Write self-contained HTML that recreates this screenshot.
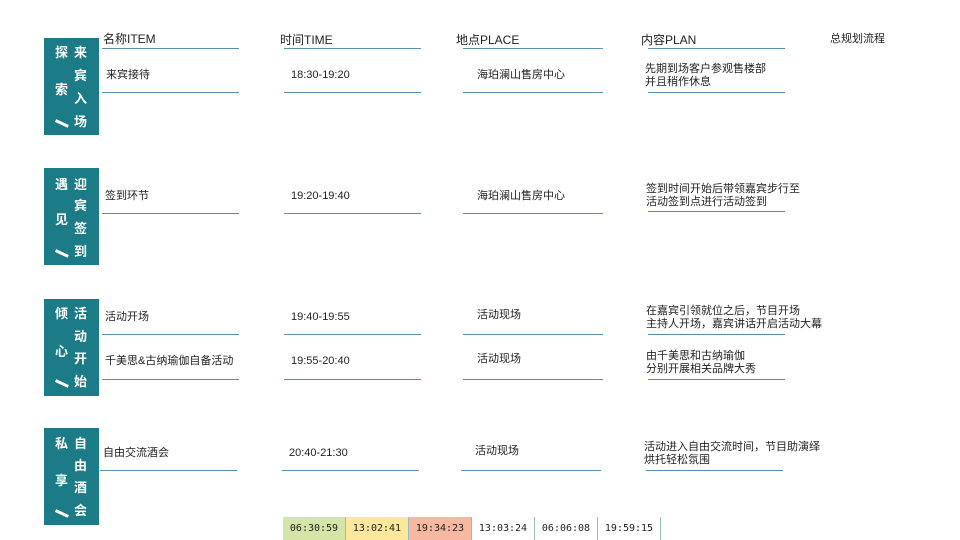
<!DOCTYPE html>
<html><head><meta charset="utf-8"><style>
*{margin:0;padding:0;box-sizing:border-box}
body{width:960px;height:540px;background:#fff;position:relative;overflow:hidden;font-family:"Liberation Sans","Noto Sans CJK SC",sans-serif;color:#222}
.t{position:absolute;font-size:11px;white-space:nowrap;line-height:13px;margin-top:1px}
.h{position:absolute;font-size:12px;white-space:nowrap;line-height:14px}
.l{position:absolute;height:1px;background:#5a8fab}
.box{position:absolute;left:44px;width:55px;height:97px;background:#1b7b86}
.c{position:absolute;color:#fff;font-weight:bold;font-size:13px;line-height:14px}
.s{position:absolute;width:14px;height:2.5px;background:#fff;transform:rotate(25deg)}
.cell{position:absolute;top:517px;height:23px;width:63px;font-family:"DejaVu Sans Mono","Liberation Mono",monospace;font-size:10px;text-align:center;line-height:23px;border-right:1px solid #9bb}
</style></head><body>
<div class="h" style="left:103px;top:32px">名称ITEM</div>
<div class="h" style="left:280px;top:33px">时间TIME</div>
<div class="h" style="left:456px;top:33px">地点PLACE</div>
<div class="h" style="left:641px;top:33px">内容PLAN</div>
<div class="t" style="left:830px;top:32px">总规划流程</div>
<div class="l" style="left:102px;top:48px;width:137px"></div>
<div class="l" style="left:284px;top:48px;width:137px"></div>
<div class="l" style="left:463px;top:48px;width:140px"></div>
<div class="l" style="left:648px;top:48px;width:137px"></div>

<div class="t" style="left:106px;top:68px">来宾接待</div>
<div class="t" style="left:291px;top:68px">18:30-19:20</div>
<div class="t" style="left:477px;top:68px">海珀澜山售房中心</div>
<div class="t" style="left:645px;top:62px">先期到场客户参观售楼部<br>并且稍作休息</div>
<div class="l" style="left:102px;top:92px;width:137px"></div>
<div class="l" style="left:284px;top:92px;width:137px"></div>
<div class="l" style="left:463px;top:92px;width:140px"></div>
<div class="l" style="left:648px;top:92px;width:137px"></div>

<div class="t" style="left:105px;top:189px">签到环节</div>
<div class="t" style="left:291px;top:189px">19:20-19:40</div>
<div class="t" style="left:477px;top:189px">海珀澜山售房中心</div>
<div class="t" style="left:646px;top:182px">签到时间开始后带领嘉宾步行至<br>活动签到点进行活动签到</div>
<div class="l" style="left:102px;top:213px;width:137px"></div>
<div class="l" style="left:284px;top:213px;width:137px"></div>
<div class="l" style="left:463px;top:213px;width:140px"></div>
<div class="l" style="left:648px;top:211px;width:137px"></div>

<div class="t" style="left:105px;top:310px">活动开场</div>
<div class="t" style="left:291px;top:310px">19:40-19:55</div>
<div class="t" style="left:477px;top:308px">活动现场</div>
<div class="t" style="left:646px;top:304px">在嘉宾引领就位之后，节目开场<br>主持人开场，嘉宾讲话开启活动大幕</div>
<div class="l" style="left:102px;top:334px;width:137px"></div>
<div class="l" style="left:284px;top:334px;width:137px"></div>
<div class="l" style="left:463px;top:334px;width:140px"></div>
<div class="l" style="left:648px;top:334px;width:137px"></div>
<div class="t" style="left:105px;top:354px">千美思&amp;古纳瑜伽自备活动</div>
<div class="t" style="left:291px;top:354px">19:55-20:40</div>
<div class="t" style="left:477px;top:352px">活动现场</div>
<div class="t" style="left:646px;top:349px">由千美思和古纳瑜伽<br>分别开展相关品牌大秀</div>
<div class="l" style="left:102px;top:379px;width:137px"></div>
<div class="l" style="left:284px;top:379px;width:137px"></div>
<div class="l" style="left:463px;top:379px;width:140px"></div>
<div class="l" style="left:648px;top:379px;width:137px"></div>

<div class="t" style="left:103px;top:446px">自由交流酒会</div>
<div class="t" style="left:289px;top:446px">20:40-21:30</div>
<div class="t" style="left:475px;top:444px">活动现场</div>
<div class="t" style="left:644px;top:440px">活动进入自由交流时间，节目助演绎<br>烘托轻松氛围</div>
<div class="l" style="left:100px;top:470px;width:137px"></div>
<div class="l" style="left:282px;top:470px;width:137px"></div>
<div class="l" style="left:461px;top:470px;width:140px"></div>
<div class="l" style="left:646px;top:470px;width:137px"></div>

<div class="box" style="top:38px">
<div class="c" style="left:11px;top:8px">探</div><div class="c" style="left:11px;top:45px">索</div><div class="s" style="left:11px;top:84px"></div>
<div class="c" style="left:30px;top:8px">来</div><div class="c" style="left:30px;top:31px">宾</div><div class="c" style="left:30px;top:54px">入</div><div class="c" style="left:30px;top:77px">场</div>
</div>
<div class="box" style="top:168px">
<div class="c" style="left:11px;top:10px">遇</div><div class="c" style="left:11px;top:45px">见</div><div class="s" style="left:11px;top:84px"></div>
<div class="c" style="left:30px;top:10px">迎</div><div class="c" style="left:30px;top:31px">宾</div><div class="c" style="left:30px;top:54px">签</div><div class="c" style="left:30px;top:77px">到</div>
</div>
<div class="box" style="top:299px">
<div class="c" style="left:11px;top:8px">倾</div><div class="c" style="left:11px;top:46px">心</div><div class="s" style="left:11px;top:83px"></div>
<div class="c" style="left:30px;top:8px">活</div><div class="c" style="left:30px;top:31px">动</div><div class="c" style="left:30px;top:53px">开</div><div class="c" style="left:30px;top:76px">始</div>
</div>
<div class="box" style="top:428px">
<div class="c" style="left:11px;top:9px">私</div><div class="c" style="left:11px;top:46px">享</div><div class="s" style="left:11px;top:84px"></div>
<div class="c" style="left:30px;top:9px">自</div><div class="c" style="left:30px;top:31px">由</div><div class="c" style="left:30px;top:53px">酒</div><div class="c" style="left:30px;top:76px">会</div>
</div>

<div class="cell" style="left:283px;background:#d4e6a7">06:30:59</div>
<div class="cell" style="left:346px;background:#fbe89a">13:02:41</div>
<div class="cell" style="left:409px;background:#f6b8a0">19:34:23</div>
<div class="cell" style="left:472px">13:03:24</div>
<div class="cell" style="left:535px">06:06:08</div>
<div class="cell" style="left:598px">19:59:15</div>
</body></html>
